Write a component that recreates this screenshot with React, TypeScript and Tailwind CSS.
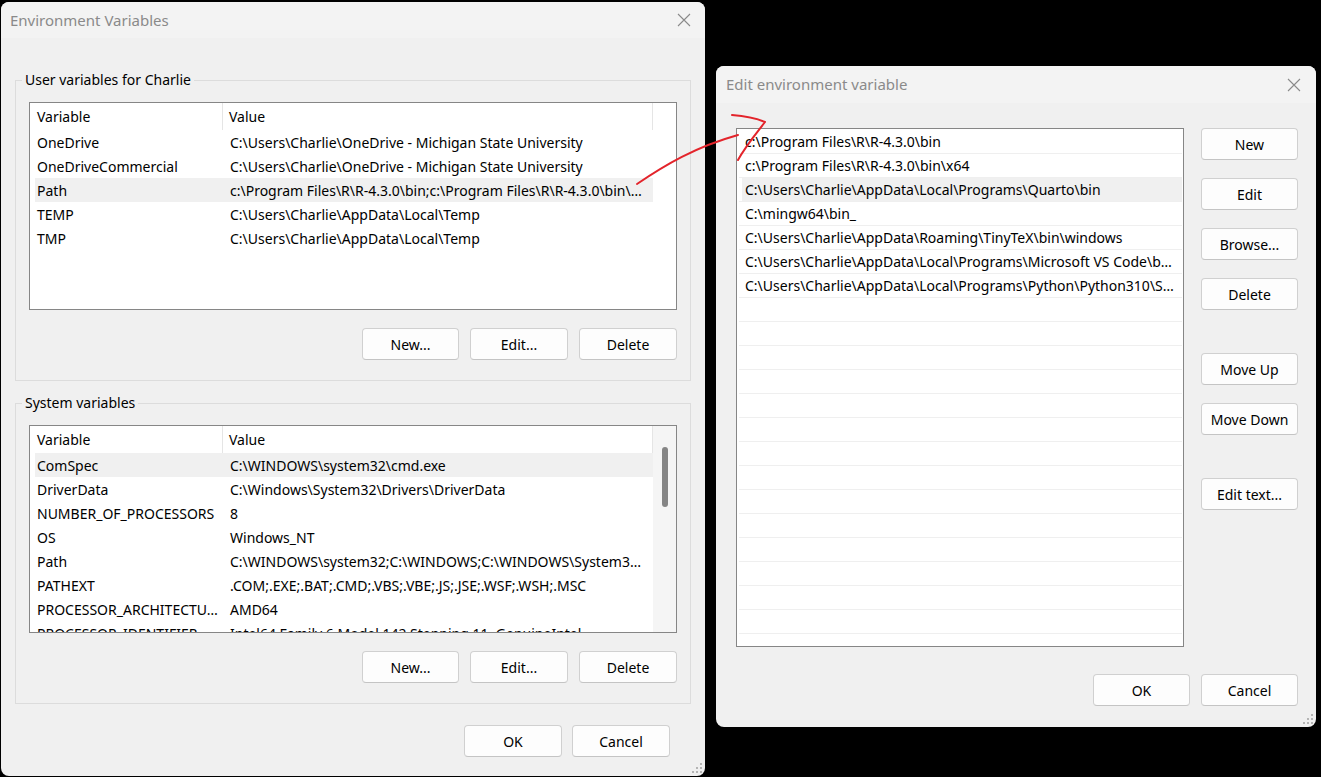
import React from 'react';

const userVars: [string, string][] = [
  ['OneDrive', String.raw`C:\Users\Charlie\OneDrive - Michigan State University`],
  ['OneDriveCommercial', String.raw`C:\Users\Charlie\OneDrive - Michigan State University`],
  ['Path', String.raw`c:\Program Files\R\R-4.3.0\bin;c:\Program Files\R\R-4.3.0\bin\…`],
  ['TEMP', String.raw`C:\Users\Charlie\AppData\Local\Temp`],
  ['TMP', String.raw`C:\Users\Charlie\AppData\Local\Temp`],
];

const sysVars: [string, string][] = [
  ['ComSpec', String.raw`C:\WINDOWS\system32\cmd.exe`],
  ['DriverData', String.raw`C:\Windows\System32\Drivers\DriverData`],
  ['NUMBER_OF_PROCESSORS', '8'],
  ['OS', 'Windows_NT'],
  ['Path', String.raw`C:\WINDOWS\system32;C:\WINDOWS;C:\WINDOWS\System3…`],
  ['PATHEXT', '.COM;.EXE;.BAT;.CMD;.VBS;.VBE;.JS;.JSE;.WSF;.WSH;.MSC'],
  ['PROCESSOR_ARCHITECTU…', 'AMD64'],
  ['PROCESSOR_IDENTIFIER', 'Intel64 Family 6 Model 142 Stepping 11, GenuineIntel'],
];

const pathEntries = [
  String.raw`c:\Program Files\R\R-4.3.0\bin`,
  String.raw`c:\Program Files\R\R-4.3.0\bin\x64`,
  String.raw`C:\Users\Charlie\AppData\Local\Programs\Quarto\bin`,
  String.raw`C:\mingw64\bin_`,
  String.raw`C:\Users\Charlie\AppData\Roaming\TinyTeX\bin\windows`,
  String.raw`C:\Users\Charlie\AppData\Local\Programs\Microsoft VS Code\b…`,
  String.raw`C:\Users\Charlie\AppData\Local\Programs\Python\Python310\S…`,
];

function Btn({ label, wide }: { label: string; wide?: boolean }) {
  return (
    <button
      className={`${wide ? 'w-[98px]' : 'w-[97px]'} h-[32px] shrink-0 rounded-[4px] border border-[#d0d0d0] border-b-[#c4c4c4] bg-[#fdfdfd] text-[14px] text-black`}
    >
      {label}
    </button>
  );
}

function CloseX() {
  return (
    <svg width="14" height="14" viewBox="0 0 14 14" className="text-[#8a8a8a]">
      <path d="M1 1 L13 13 M13 1 L1 13" stroke="currentColor" strokeWidth="1.1" />
    </svg>
  );
}

function Grip() {
  return (
    <svg width="10" height="10" viewBox="0 0 10 10" className="absolute bottom-[3px] right-[3px]">
      <g fill="#b5b5b5">
        <rect x="8" y="0" width="2" height="2" />
        <rect x="4" y="4" width="2" height="2" />
        <rect x="8" y="4" width="2" height="2" />
        <rect x="0" y="8" width="2" height="2" />
        <rect x="4" y="8" width="2" height="2" />
        <rect x="8" y="8" width="2" height="2" />
      </g>
    </svg>
  );
}

function VarList({
  rows,
  selected,
  scroll,
}: {
  rows: [string, string][];
  selected: number;
  scroll?: boolean;
}) {
  return (
    <div className="relative h-[208px] w-[648px] overflow-hidden border border-[#868686] bg-white">
      <div className="flex h-[27px] items-center">
        <div className="flex h-full w-[193px] items-center border-r border-[#e5e5e5] pl-[7px]">Variable</div>
        <div className="flex h-full w-[430px] items-center border-r border-[#e5e5e5] pl-[6px]">Value</div>
      </div>
      {rows.map(([name, value], i) => (
        <div
          key={name + i}
          className={`ml-[5px] flex h-[24px] w-[618px] items-center whitespace-nowrap ${
            i === selected ? 'bg-[#f0f0f0]' : ''
          }`}
        >
          <div className="w-[188px] overflow-hidden pl-[2px]">{name}</div>
          <div className="w-[430px] overflow-hidden pl-[7px]">{value}</div>
        </div>
      ))}
      {scroll && (
        <div className="absolute right-0 top-0 flex h-full w-[23px] justify-center bg-[#f5f5f5]">
          <div className="mt-[21px] h-[60px] w-[6px] rounded-full bg-[#858585]" />
        </div>
      )}
    </div>
  );
}

function Group({
  title,
  rows,
  selected,
  scroll,
}: {
  title: string;
  rows: [string, string][];
  selected: number;
  scroll?: boolean;
}) {
  return (
    <div className="relative mx-[14px] h-[301px] border border-[#dcdcdc] px-[13px] pt-[21px]">
      <span className="absolute -top-[11px] left-[6px] bg-[#f0f0f0] px-[3px] leading-[20px]">{title}</span>
      <VarList rows={rows} selected={selected} scroll={scroll} />
      <div className="mt-[18px] flex justify-end gap-[11px]">
        <Btn label="New..." />
        <Btn label="Edit..." wide />
        <Btn label="Delete" wide />
      </div>
    </div>
  );
}

export default function App() {
  return (
    <div className="relative h-[777px] w-[1321px] overflow-hidden bg-black font-['Noto_Sans',sans-serif] text-[14px] text-black">
      {/* Environment Variables window */}
      <div className="absolute left-[1px] top-[2px] flex h-[774px] w-[704px] flex-col overflow-hidden rounded-[8px] bg-[#f0f0f0]">
        <div className="flex h-[36px] shrink-0 items-center justify-between bg-[#f3f3f3] pl-[9px] pr-[14px]">
          <span className="text-[15px] text-[#8a8a8a]">Environment Variables</span>
          <CloseX />
        </div>
        <div className="flex flex-col pt-[42px]">
          <Group title="User variables for Charlie" rows={userVars} selected={2} />
          <div className="h-[22px]" />
          <Group title="System variables" rows={sysVars} selected={0} scroll />
          <div className="mt-[21px] flex justify-end gap-[10px] pr-[35px]">
            <Btn label="OK" wide />
            <Btn label="Cancel" wide />
          </div>
        </div>
        <Grip />
      </div>

      {/* Edit environment variable window */}
      <div className="absolute left-[716px] top-[66px] flex h-[661px] w-[600px] flex-col overflow-hidden rounded-[8px] bg-[#f0f0f0]">
        <div className="flex h-[37px] shrink-0 items-center justify-between bg-[#f3f3f3] pl-[10px] pr-[15px]">
          <span className="text-[15px] text-[#8a8a8a]">Edit environment variable</span>
          <CloseX />
        </div>
        <div className="flex pl-[20px] pt-[25px]">
          <div className="h-[519px] w-[448px] overflow-hidden border border-[#868686] bg-white pt-[1px]">
            {Array.from({ length: 22 }).map((_, i) => (
              <div key={i} className="mx-[1px] flex h-[24px] flex-col">
                <div
                  className={
                    i === 2
                      ? 'ml-[4px] flex h-[23px] items-center whitespace-nowrap bg-[#f0f0f0] pl-[3px]'
                      : 'flex h-[23px] items-center whitespace-nowrap pl-[7px]'
                  }
                >
                  {pathEntries[i] ?? ''}
                </div>
                <div className="ml-[1px] h-[1px] bg-[#efefef]" />
              </div>
            ))}
          </div>
          <div className="ml-[17px] flex flex-col">
            <Btn label="New" />
            <div className="h-[18px]" />
            <Btn label="Edit" />
            <div className="h-[18px]" />
            <Btn label="Browse..." />
            <div className="h-[18px]" />
            <Btn label="Delete" />
            <div className="h-[43px]" />
            <Btn label="Move Up" />
            <div className="h-[18px]" />
            <Btn label="Move Down" />
            <div className="h-[43px]" />
            <Btn label="Edit text..." />
          </div>
        </div>
        <div className="mt-[27px] flex justify-end gap-[11px] pr-[18px]">
          <Btn label="OK" />
          <Btn label="Cancel" />
        </div>
        <Grip />
      </div>

      {/* hand-drawn red arrow */}
      <svg className="pointer-events-none absolute left-0 top-0" width="1321" height="777" viewBox="0 0 1321 777">
        <g fill="none" stroke="#e3242b" strokeWidth="2" strokeLinecap="round" strokeLinejoin="round">
          <path d="M637 184 C 665 165, 695 147, 738 135" />
          <path d="M732 115 C 745 116, 756 118, 765 122 C 755 135, 745 147, 738 160" />
        </g>
      </svg>
    </div>
  );
}
